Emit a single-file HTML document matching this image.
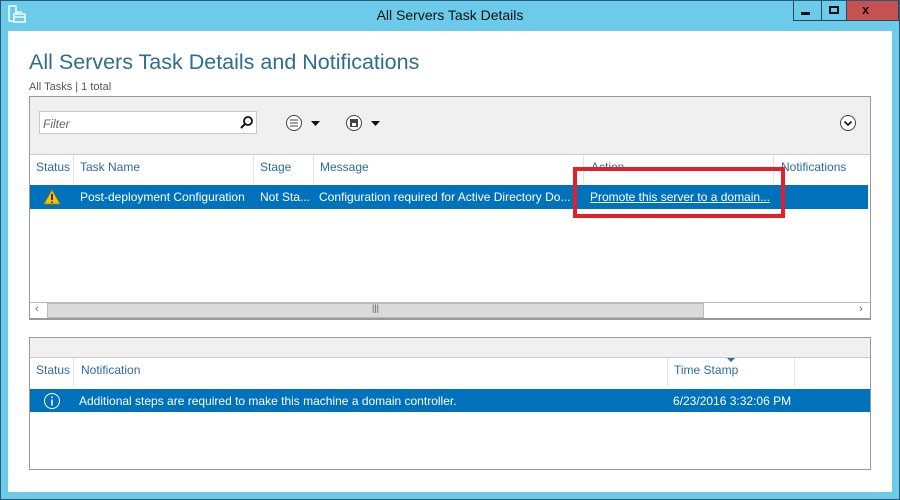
<!DOCTYPE html><html><head><style>
*{margin:0;padding:0;box-sizing:border-box}
body{width:900px;height:500px;background:#6ccbea;font-family:"Liberation Sans",sans-serif;font-size:12px;position:relative;overflow:hidden}
.a{position:absolute}
.hd{color:#2d6ca2;font-size:12px}
.wt{color:#fff;font-size:12px}
</style></head><body>
<svg class="a" style="left:8px;top:5px" width="18" height="18"><rect x="1" y="1" width="7" height="15" fill="none" stroke="#fff" stroke-width="1.4"/><rect x="6" y="9" width="11" height="8" fill="#6ccbea" stroke="#fff" stroke-width="1.4"/><path d="M9.5 9V7h4v2M6 12h11" stroke="#fff" stroke-width="1.2" fill="none"/></svg>
<div class="a" style="left:0;top:7px;width:900px;text-align:center;font-size:14px;color:#111">All Servers Task Details</div>
<div class="a" style="left:793px;top:0;width:106px;height:21px;border:1px solid #2a4a5a;background:#6ccbea"></div>
<div class="a" style="left:821px;top:0;width:1px;height:21px;background:#2a4a5a"></div>
<div class="a" style="left:846px;top:0;width:1px;height:21px;background:#2a4a5a"></div>
<div class="a" style="left:847px;top:1px;width:51px;height:19px;background:#c75050"></div>
<div class="a" style="left:801px;top:12px;width:9px;height:3px;background:#111"></div>
<div class="a" style="left:829px;top:6px;width:10px;height:8px;border:2px solid #111"></div>
<div class="a" style="left:862px;top:2px;font-size:13px;font-weight:bold;color:#111">x</div>
<div class="a" style="left:8px;top:31px;width:884px;height:461px;background:#fff"></div>
<div class="a" style="left:0;top:0;width:900px;height:500px;border:1px solid #2a5a78"></div>
<div class="a" style="left:29px;top:50px;font-size:21.5px;color:#2d6e8e">All Servers Task Details and Notifications</div>
<div class="a" style="left:29px;top:81px;font-size:11px;color:#555">All Tasks | 1 total</div>
<div class="a" style="left:29px;top:96px;width:842px;height:224px;border:1px solid #999;background:#fff"></div>
<div class="a" style="left:30px;top:97px;width:840px;height:58px;background:#f0f0f0;border-bottom:1px solid #ccc"></div>
<div class="a" style="left:39px;top:111px;width:218px;height:23px;background:#fff;border:1px solid #c8c8c8"></div>
<div class="a" style="left:43px;top:117px;font-style:italic;color:#666">Filter</div>
<svg class="a" style="left:240px;top:115px" width="14" height="14"><circle cx="8" cy="6" r="4" fill="none" stroke="#111" stroke-width="1.8"/><path d="M5 9L1 13" stroke="#111" stroke-width="2"/></svg>
<svg class="a" style="left:285px;top:114px" width="40" height="18"><circle cx="9" cy="9" r="7.5" fill="#fff" stroke="#444"/><path d="M5 6h8M5 9h8M5 12h8" stroke="#444"/><path d="M26 7h9l-4.5 5z" fill="#111"/></svg>
<svg class="a" style="left:345px;top:114px" width="40" height="18"><circle cx="9" cy="9" r="7.5" fill="#fff" stroke="#444"/><rect x="5" y="5" width="8" height="8" fill="#444"/><rect x="7" y="9" width="4" height="3" fill="#fff"/><path d="M26 7h9l-4.5 5z" fill="#111"/></svg>
<svg class="a" style="left:839px;top:114px" width="18" height="18"><circle cx="9" cy="9" r="7.5" fill="#fff" stroke="#444"/><path d="M5.5 7.5l3.5 3.5 3.5-3.5" fill="none" stroke="#111" stroke-width="1.6"/></svg>
<div class="a" style="left:73px;top:155px;width:1px;height:28px;background:#e3e3e3"></div>
<div class="a" style="left:253px;top:155px;width:1px;height:28px;background:#e3e3e3"></div>
<div class="a" style="left:313px;top:155px;width:1px;height:28px;background:#e3e3e3"></div>
<div class="a" style="left:583px;top:155px;width:1px;height:28px;background:#e3e3e3"></div>
<div class="a" style="left:773px;top:155px;width:1px;height:28px;background:#e3e3e3"></div>
<div class="a hd" style="left:36px;top:160px">Status</div>
<div class="a hd" style="left:80px;top:160px">Task Name</div>
<div class="a hd" style="left:260px;top:160px">Stage</div>
<div class="a hd" style="left:320px;top:160px">Message</div>
<div class="a hd" style="left:591px;top:160px">Action</div>
<div class="a hd" style="left:781px;top:160px">Notifications</div>
<div class="a" style="left:30px;top:185px;width:838px;height:24px;background:#0072bc"></div>
<svg class="a" style="left:43px;top:189px" width="18" height="16"><path d="M9 1L17 15H1z" fill="#f5c400" stroke="#a87a00" stroke-width=".8"/><path d="M9 5v6M9 12.5v1.5" stroke="#222" stroke-width="1.8"/></svg>
<div class="a wt" style="left:80px;top:190px">Post-deployment Configuration</div>
<div class="a wt" style="left:260px;top:190px">Not Sta...</div>
<div class="a wt" style="left:319px;top:190px">Configuration required for Active Directory Do...</div>
<div class="a wt" style="left:590px;top:190px;text-decoration:underline">Promote this server to a domain...</div>
<div class="a" style="left:573px;top:167px;width:212px;height:51px;border:4px solid #e3202a"></div>
<div class="a" style="left:30px;top:302px;width:840px;height:17px;background:#fff;border-top:1px solid #bbb;border-bottom:1px solid #999"></div>
<div class="a" style="left:47px;top:303px;width:657px;height:15px;background:#dadada;border:1px solid #bbb"></div>
<div class="a" style="left:35px;top:303px;color:#666;font-size:11px">‹</div>
<div class="a" style="left:859px;top:303px;color:#666;font-size:11px">›</div>
<div class="a" style="left:372px;top:303px;color:#555;font-size:9px">|||</div>
<div class="a" style="left:29px;top:337px;width:842px;height:133px;border:1px solid #999;background:#fff"></div>
<div class="a" style="left:30px;top:338px;width:840px;height:20px;background:#f0f0f0;border-bottom:1px solid #ccc"></div>
<div class="a" style="left:73px;top:358px;width:1px;height:28px;background:#e3e3e3"></div>
<div class="a" style="left:667px;top:358px;width:1px;height:28px;background:#e3e3e3"></div>
<div class="a" style="left:794px;top:358px;width:1px;height:28px;background:#e3e3e3"></div>
<div class="a hd" style="left:36px;top:363px">Status</div>
<div class="a hd" style="left:81px;top:363px">Notification</div>
<div class="a hd" style="left:674px;top:363px">Time Stamp</div>
<svg class="a" style="left:727px;top:358px" width="8" height="5"><path d="M0 0h8l-4 4z" fill="#2d6ca2"/></svg>
<div class="a" style="left:30px;top:389px;width:840px;height:23px;background:#0072bc"></div>
<svg class="a" style="left:43px;top:392px" width="18" height="18"><circle cx="9" cy="9" r="7.5" fill="none" stroke="#fff"/><path d="M9 7.5v6M9 4.5v1.5" stroke="#fff" stroke-width="1.5"/></svg>
<div class="a wt" style="left:79px;top:394px">Additional steps are required to make this machine a domain controller.</div>
<div class="a wt" style="left:673px;top:394px">6/23/2016 3:32:06 PM</div>
</body></html>
